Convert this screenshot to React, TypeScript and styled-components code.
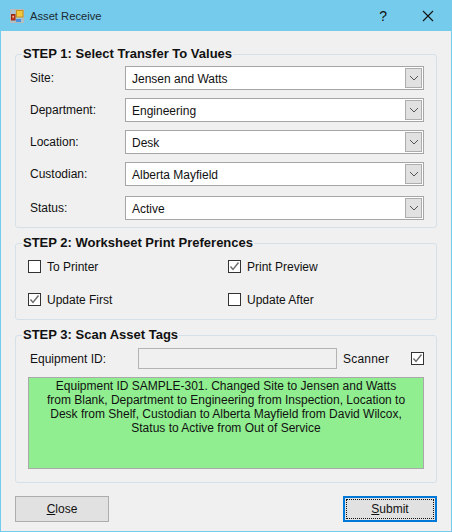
import React from "react";
import styled, { createGlobalStyle } from "styled-components";

const GlobalStyle = createGlobalStyle`
  html, body {
    margin: 0;
    padding: 0;
    background: #f0f0f0;
  }
  body {
    font-family: "Liberation Sans", Arial, sans-serif;
    font-size: 12px;
    color: #111;
  }
`;

const transferFields = [
  { label: "Site:", value: "Jensen and Watts", gap: 8 },
  { label: "Department:", value: "Engineering", gap: 8 },
  { label: "Location:", value: "Desk", gap: 8 },
  { label: "Custodian:", value: "Alberta Mayfield", gap: 10 },
  { label: "Status:", value: "Active", gap: 0 },
];

const printOptions = [
  { label: "To Printer", checked: false },
  { label: "Print Preview", checked: true },
  { label: "Update First", checked: true },
  { label: "Update After", checked: false },
];

const AppIcon = () => (
  <svg width="14" height="14" viewBox="0 0 14 14" aria-hidden="true">
    <rect x="0.5" y="0.5" width="13" height="13" fill="#a9c6d4" stroke="#b9b9b9" />
    <path d="M0.5 10.5 H13.5 M5.5 0.5 V13.5" stroke="#b9b9b9" fill="none" />
    <rect x="6.5" y="1.5" width="6.5" height="6.5" fill="#f5c73c" stroke="#c8921e" />
    <rect x="1.5" y="5.5" width="3.5" height="5.5" fill="#d23a20" stroke="#8f2c18" />
    <rect x="2.5" y="7" width="1.5" height="1.5" fill="#f3c9a0" />
    <rect x="6" y="10" width="5" height="3" fill="#4a90e0" />
  </svg>
);

const CheckMark = () => (
  <svg width="11" height="11" viewBox="0 0 11 11" aria-hidden="true">
    <path d="M1.5 5.5 L4 8.5 L9.5 1.5" fill="none" stroke="#6b6b6b" strokeWidth="1.4" />
  </svg>
);

const Chevron = () => (
  <svg width="10" height="6" viewBox="0 0 10 6" aria-hidden="true">
    <path d="M1 1 L5 5 L9 1" fill="none" stroke="#555" strokeWidth="1" />
  </svg>
);

const Dropdown = ({ value }: { value: string }) => (
  <SelectBox>
    <SelectText>{value}</SelectText>
    <SelectArrow>
      <Chevron />
    </SelectArrow>
  </SelectBox>
);

const Checkbox = ({ checked }: { checked: boolean }) => (
  <CheckSquare>{checked && <CheckMark />}</CheckSquare>
);

export default function App() {
  return (
    <>
      <GlobalStyle />
      <Window>
        <TitleBar>
          <AppIcon />
          <TitleText>Asset Receive</TitleText>
          <HelpGlyph>?</HelpGlyph>
          <CloseGlyph viewBox="0 0 12 12" aria-hidden="true">
            <path d="M1 1 L11 11 M11 1 L1 11" stroke="#111" strokeWidth="1.1" fill="none" />
          </CloseGlyph>
        </TitleBar>
        <Body>
          <Group $height={181}>
            <Legend>STEP 1: Select Transfer To Values</Legend>
            <FieldStack>
              {transferFields.map((field) => (
                <FieldRow key={field.label} $gap={field.gap}>
                  <FieldLabel>{field.label}</FieldLabel>
                  <Dropdown value={field.value} />
                </FieldRow>
              ))}
            </FieldStack>
          </Group>
          <Group $height={84}>
            <Legend>STEP 2: Worksheet Print Preferences</Legend>
            <OptionGrid>
              {printOptions.map((option) => (
                <OptionRow key={option.label}>
                  <Checkbox checked={option.checked} />
                  <span>{option.label}</span>
                </OptionRow>
              ))}
            </OptionGrid>
          </Group>
          <Group $height={155}>
            <Legend>STEP 3: Scan Asset Tags</Legend>
            <ScanRow>
              <ScanLabel>Equipment ID:</ScanLabel>
              <ScanInput />
              <ScannerLabel>Scanner</ScannerLabel>
              <Checkbox checked />
            </ScanRow>
            <Message>
              Equipment ID SAMPLE-301. Changed Site to Jensen and Watts from Blank, Department to
              Engineering from Inspection, Location to Desk from Shelf, Custodian to Alberta
              Mayfield from David Wilcox, Status to Active from Out of Service
            </Message>
          </Group>
          <ButtonRow>
            <CloseButton>
              <u>C</u>lose
            </CloseButton>
            <SubmitButton>
              <FocusRing>
                <u>S</u>ubmit
              </FocusRing>
            </SubmitButton>
          </ButtonRow>
        </Body>
      </Window>
    </>
  );
}

const Window = styled.div`
  width: 452px;
  height: 532px;
  box-sizing: border-box;
  display: flex;
  flex-direction: column;
  background: #f0f0f0;
  border: 1px solid #75cbeb;
  overflow: hidden;
`;

const TitleBar = styled.div`
  height: 30px;
  flex: none;
  display: flex;
  align-items: center;
  padding: 0 17px 0 9px;
  background: #75cbeb;
`;

const TitleText = styled.span`
  margin-left: 6px;
  flex: 1;
  font-size: 11.2px;
  color: #1a2a33;
`;

const HelpGlyph = styled.span`
  margin-right: 35px;
  font-size: 14px;
  font-weight: 400;
  color: #111;
`;

const CloseGlyph = styled.svg`
  width: 12px;
  height: 12px;
`;

const Body = styled.div`
  flex: 1;
  display: flex;
  flex-direction: column;
  gap: 8px;
  padding: 16px 14px 0;
`;

const Group = styled.fieldset<{ $height: number }>`
  box-sizing: border-box;
  height: ${(p) => p.$height}px;
  margin: 0;
  padding: 0 12px;
  border: 1px solid #d6e0e8;
  border-radius: 3px;
  min-width: 0;
`;

const Legend = styled.legend`
  margin-left: -6px;
  padding: 0 1px;
  font-size: 13px;
  font-weight: 700;
  line-height: 14px;
  color: #111;
`;

const FieldStack = styled.div`
  display: flex;
  flex-direction: column;
  padding-top: 5px;
`;

const FieldRow = styled.div<{ $gap: number }>`
  display: flex;
  align-items: center;
  height: 24px;
  margin-bottom: ${(p) => p.$gap}px;
`;

const FieldLabel = styled.span`
  width: 97px;
  box-sizing: border-box;
  padding-left: 2px;
  flex: none;
`;

const SelectBox = styled.div`
  flex: 1;
  height: 24px;
  box-sizing: border-box;
  display: flex;
  align-items: center;
  justify-content: space-between;
  background: #fff;
  border: 1px solid #a6a6a6;
  padding-left: 6px;
`;

const SelectText = styled.span`
  padding-top: 1px;
  font-size: 12px;
`;

const SelectArrow = styled.span`
  width: 17px;
  height: 20px;
  margin-right: 1px;
  box-sizing: border-box;
  display: flex;
  align-items: center;
  justify-content: center;
  background: #e1e1e1;
  border: 1px solid #adadad;
`;

const OptionGrid = styled.div`
  display: grid;
  grid-template-columns: 200px 1fr;
  row-gap: 20px;
  padding-top: 10px;
`;

const OptionRow = styled.div`
  display: flex;
  align-items: center;
  gap: 6px;
  height: 13px;
`;

const CheckSquare = styled.span`
  width: 13px;
  height: 13px;
  flex: none;
  box-sizing: border-box;
  display: flex;
  align-items: center;
  justify-content: center;
  background: #fff;
  border: 1px solid #333;
`;

const ScanRow = styled.div`
  display: flex;
  align-items: center;
  height: 21px;
  margin-top: 6px;
`;

const ScanLabel = styled.span`
  width: 110px;
  padding-left: 2px;
  box-sizing: border-box;
  flex: none;
`;

const ScanInput = styled.div`
  width: 199px;
  height: 21px;
  box-sizing: border-box;
  flex: none;
  background: #f0f0f0;
  border: 1px solid #b4b4b4;
`;

const ScannerLabel = styled.span`
  flex: 1;
  margin-left: 6px;
  letter-spacing: 0.2px;
`;

const Message = styled.div`
  height: 92px;
  margin-top: 8px;
  box-sizing: border-box;
  padding: 1px 16px;
  background: #90ee90;
  border: 1px solid #a9a9a9;
  text-align: center;
  font-size: 12px;
  line-height: 14px;
`;

const ButtonRow = styled.div`
  display: flex;
  justify-content: space-between;
  margin-top: 5px;
`;

const BaseButton = styled.button`
  width: 94px;
  height: 26px;
  box-sizing: border-box;
  padding: 0;
  font-family: inherit;
  font-size: 12px;
  color: #111;
  background: #e1e1e1;
`;

const CloseButton = styled(BaseButton)`
  border: 1px solid #adadad;
`;

const SubmitButton = styled(BaseButton)`
  border: 2px solid #0078d7;
  padding: 1px;
`;

const FocusRing = styled.span`
  display: flex;
  align-items: center;
  justify-content: center;
  height: 100%;
  box-sizing: border-box;
  border: 1px dotted #111;
  white-space: pre;
`;
